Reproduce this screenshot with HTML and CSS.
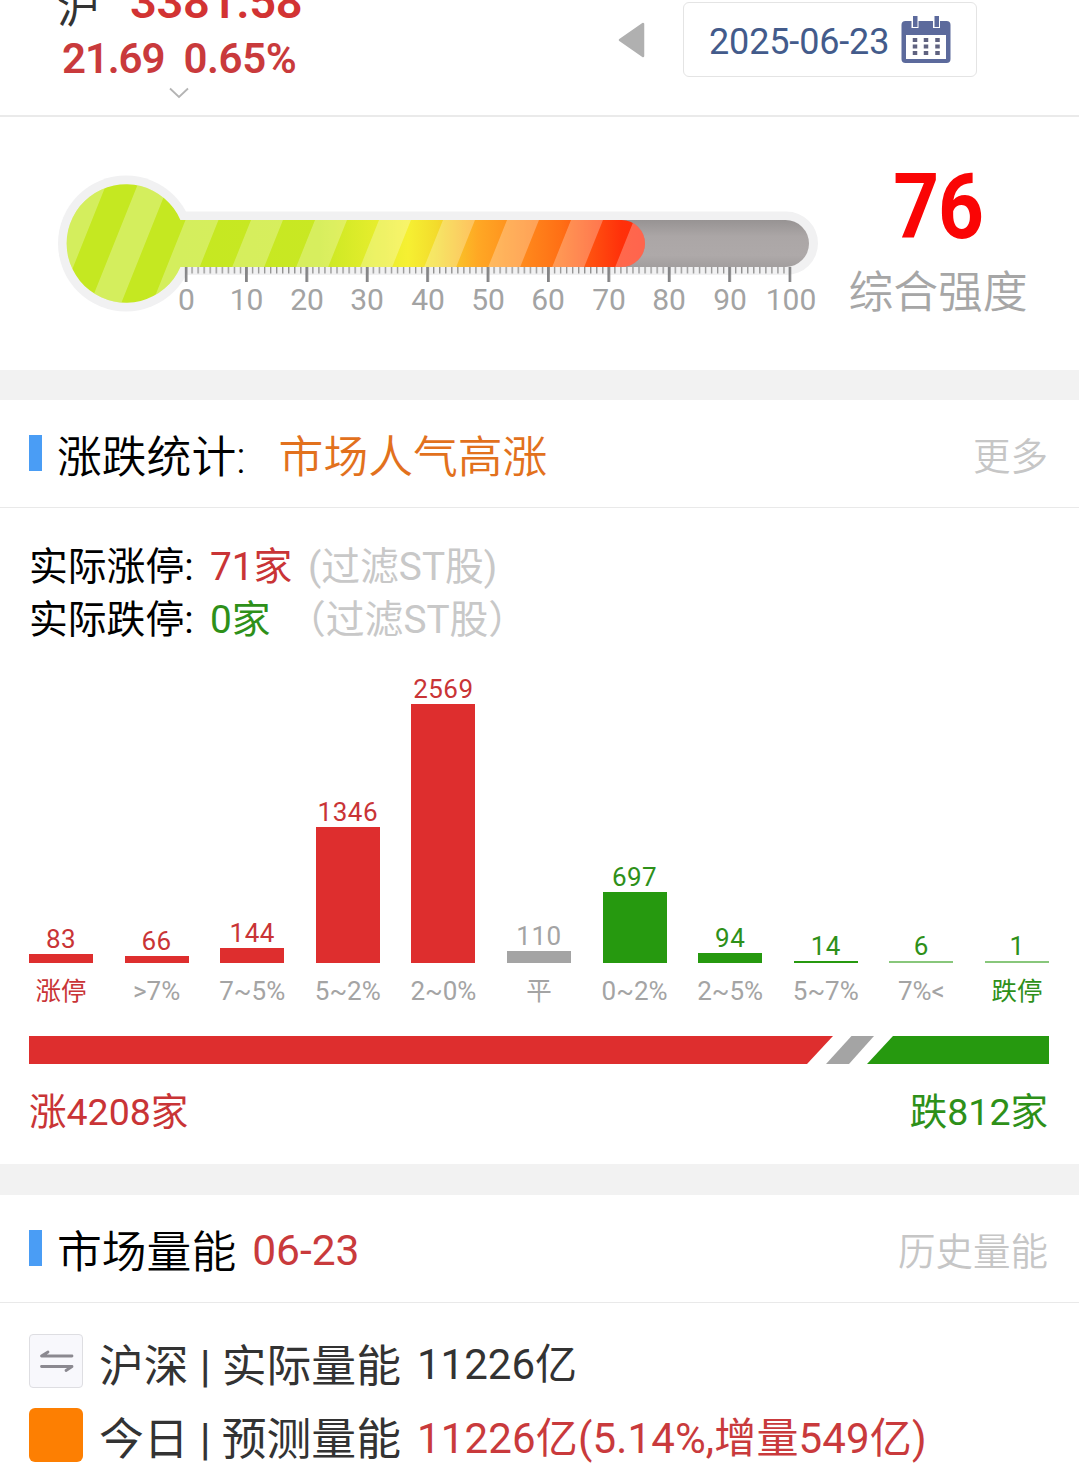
FILE: index.html
```html
<!DOCTYPE html>
<html lang="zh-CN">
<head>
<meta charset="utf-8">
<title>市场强度</title>
<link rel="stylesheet" href="styles.css">
</head>
<body>
<header class="topbar">
  <div class="index">
    <div class="index-main"><span class="index-name">沪</span><span class="index-value">3381.58</span></div>
    <div class="index-change"><span class="points">21.69</span><span>0.65%</span></div>
    <svg class="chevron" width="20" height="12" viewBox="0 0 20 12"><path d="M1 1.5l9 8.5 9-8.5" fill="none" stroke="#b4b4b4" stroke-width="1.8"/></svg>
  </div>
  <div class="date-nav">
    <svg class="prev" width="28" height="36" viewBox="0 0 28 36"><path d="M2 18L25 2v32z" fill="#b0b0b0" stroke="#b0b0b0" stroke-width="2.5" stroke-linejoin="round"/></svg>
    <div class="date-box">
      <span>2025-06-23</span>
      <svg width="50" height="48" viewBox="0 0 50 48">
        <rect x="0.5" y="5" width="49" height="42" rx="4" fill="#5c6a9c"/>
        <rect x="5" y="19" width="40" height="24" fill="#fff"/>
        <path d="M10.5 0h7v12h-7zM32 0h7v12h-7z" fill="#fff"/>
        <path d="M12 0h4.500v11H12zM33.500 0H38v11h-4.500z" fill="#5c6a9c"/>
        <path d="M14 22v17M25 22v17M36.500 22v17" stroke="#5f6280" stroke-width="4.500" stroke-dasharray="4 2.500"/>
      </svg>
    </div>
  </div>
</header>

<section class="strength">
  <svg class="gauge" width="780" height="150" viewBox="50 170 780 150">
    <defs>
      <linearGradient id="heat" gradientUnits="userSpaceOnUse" x1="180" y1="0" x2="645" y2="0">
        <stop offset="0" stop-color="#c5e821"/><stop offset=".3" stop-color="#c9e823"/>
        <stop offset=".49" stop-color="#f6f032"/><stop offset=".55" stop-color="#f3dc2c"/><stop offset=".64" stop-color="#ffa824"/>
        <stop offset=".82" stop-color="#ff6f15"/><stop offset=".95" stop-color="#ff300a"/><stop offset="1" stop-color="#ff2c0c"/>
      </linearGradient>
      <linearGradient id="groove" x1="0" y1="0" x2="0" y2="1">
        <stop offset="0" stop-color="#979393"/><stop offset=".35" stop-color="#aba6a6"/><stop offset=".75" stop-color="#aea9a9"/><stop offset="1" stop-color="#a29e9e"/>
      </linearGradient>
      <clipPath id="fill"><path d="M180.400 220H621.500a23.500 23.500 0 0 1 0 47H180.400a59.300 59.300 0 1 1 0-47z"/></clipPath>
      <pattern id="minor" patternUnits="userSpaceOnUse" x="185.400" y="267" width="6.040" height="7"><rect width="1.300" height="6.500" fill="#909090"/></pattern>
      <pattern id="major" patternUnits="userSpaceOnUse" x="184.600" y="267" width="60.400" height="15"><rect width="2.800" height="15" fill="#858587"/></pattern>
    </defs>
    <circle cx="126" cy="243.500" r="68" fill="#f1f1f2"/>
    <rect x="130" y="211.500" width="688" height="63.500" rx="31.700" fill="#f1f1f2"/>
    <rect x="560" y="220" width="249" height="47" rx="23.500" fill="url(#groove)"/>
    <g clip-path="url(#fill)">
      <rect x="60" y="180" width="590" height="130" fill="url(#heat)"/>
      <path transform="translate(16)" fill="#fff" fill-opacity=".27" d="M24 180H92L40 310H0zM123.500 180h31l-52 130h-31zM185.500 180h33l-52 130h-33zM251 180h32l-52 130h-32zM315 180h32l-52 130h-32zM379 180h32l-52 130h-32zM443 180h32l-52 130h-32zM507 180h32l-52 130h-32zM571 180h32l-52 130h-32zM634 180h32l-52 130h-32z"/>
    </g>
    <rect x="185" y="267" width="606" height="7" fill="url(#minor)"/>
    <rect x="184.600" y="267" width="607" height="15" fill="url(#major)"/>
    <g class="scale"><text x="186.500" y="310">0</text><text x="246.500" y="310">10</text><text x="307" y="310">20</text><text x="367" y="310">30</text><text x="428" y="310">40</text><text x="488" y="310">50</text><text x="548" y="310">60</text><text x="609" y="310">70</text><text x="669" y="310">80</text><text x="730" y="310">90</text><text x="791" y="310">100</text></g>
  </svg>
  <div class="score"><div class="score-value">76</div><div class="score-label">综合强度</div></div>
</section>

<section class="card">
  <div class="card-head"><i class="marker"></i><h2>涨跌统计:</h2><span class="mood">市场人气高涨</span><a class="more">更多</a></div>
  <div class="limits">
    <div class="limit"><span>实际涨停:</span><b class="red">71家</b><em class="half">(过滤ST股)</em></div>
    <div class="limit"><span>实际跌停:</span><b class="green">0家</b><em>（过滤ST股）</em></div>
  </div>
  <div class="chart">
    <div class="col red"><span>83</span><i style="height:9px"></i><label>涨停</label></div>
    <div class="col red muted"><span>66</span><i style="height:7px"></i><label>&gt;7%</label></div>
    <div class="col red muted"><span>144</span><i style="height:15px"></i><label>7~5%</label></div>
    <div class="col red muted"><span>1346</span><i style="height:136px"></i><label>5~2%</label></div>
    <div class="col red muted"><span>2569</span><i style="height:259px"></i><label>2~0%</label></div>
    <div class="col gray"><span>110</span><i style="height:12px"></i><label>平</label></div>
    <div class="col green muted"><span>697</span><i style="height:71px"></i><label>0~2%</label></div>
    <div class="col green muted"><span>94</span><i style="height:10px"></i><label>2~5%</label></div>
    <div class="col green muted"><span>14</span><i style="height:2px"></i><label>5~7%</label></div>
    <div class="col green muted faint"><span>6</span><i style="height:2px"></i><label>7%&lt;</label></div>
    <div class="col green faint"><span>1</span><i style="height:2px"></i><label>跌停</label></div>
  </div>
  <svg class="ratio" width="1020" height="28" viewBox="0 0 1020 28">
    <path d="M0 0H804L778 28H0z" fill="#de2e2e"/><path d="M822.500 0H845L820 28H797z" fill="#a4a4a4"/><path d="M864 0H1020V28H838z" fill="#26990f"/>
  </svg>
  <div class="totals"><span class="red">涨4208家</span><span class="green">跌812家</span></div>
</section>

<section class="card volume">
  <div class="card-head"><i class="marker"></i><h2>市场量能</h2><span class="day">06-23</span><a class="more">历史量能</a></div>
  <div class="rows">
    <div class="row">
      <span class="swap"><svg width="36" height="24" viewBox="0 0 36 24"><path d="M34 7H3.500l6.500-4M3.500 17.500H34l-6 4" fill="none" stroke="#8b8990" stroke-width="2.800" stroke-linecap="round" stroke-linejoin="round"/></svg></span>
      <span class="row-label actual">沪深 | 实际量能</span><span class="row-value">11226亿</span>
    </div>
    <div class="row">
      <span class="swatch"></span>
      <span class="row-label">今日 | 预测量能</span><span class="row-value red">11226亿(5.14%,增量549亿)</span>
    </div>
  </div>
</section>
</body>
</html>
```
FILE: styles.css
```css
* { box-sizing: border-box; }
body { margin: 0; width: 1079px; height: 1474px; overflow: hidden; background: #fff; color: #000; font-family: Roboto, "Noto Sans CJK SC", sans-serif; }
.red { color: #c93436; }
.green { color: #2e9019; }
.gray { color: #a4a4a4; }

.topbar { display: flex; height: 117px; border-bottom: 2px solid #eaeaea; }
.index { width: 618px; padding-left: 57px; }
.index-main { display: flex; height: 34px; }
.index-name { width: 73px; margin-top: -20px; font-size: 43px; line-height: 56px; color: #333; }
.index-value { margin-top: -26px; font-size: 47px; line-height: 56px; font-weight: 600; letter-spacing: -.3px; color: #d23333; }
.index-change { display: flex; gap: 19px; padding-left: 5px; font-size: 42px; line-height: 50px; font-weight: 600; letter-spacing: -.4px; color: #c93a3c; }
.points { letter-spacing: -1.100px; }
.chevron { display: block; margin: 3px 0 0 112px; }
.date-nav { display: flex; align-items: flex-start; }
.prev { margin: 22px 37px 0 0; }
.date-box { display: flex; align-items: center; gap: 12px; width: 294px; height: 75px; margin-top: 2px; padding-left: 25px; border: 1.500px solid #e4e4e4; border-radius: 6px; font-size: 36px; letter-spacing: -.15px; color: #435b8b; }
.date-box span { padding-top: 4px; }

.strength { display: flex; height: 253px; padding: 53px 0 0 50px; }
.gauge { flex: none; }
.scale { font-size: 30px; text-anchor: middle; fill: #a3a3a3; }
.score { width: 216px; text-align: center; }
.score-value { height: 96px; font-size: 90px; line-height: 76px; font-weight: 700; letter-spacing: -1.500px; color: #fa0505; transform: scaleX(.89); }
.score-label { font-size: 44.800px; line-height: 54px; font-weight: 350; color: #a6a6a6; white-space: nowrap; }

.card { border-top: 30px solid #f2f2f2; }
.volume { border-top-width: 31px; }
.card-head { display: flex; align-items: center; height: 108px; padding: 0 31px 0 29px; border-bottom: 1px solid #e9e9e9; }
.marker { width: 13px; height: 36px; margin: -2px 15px 0 0; background: #4a9df5; }
h2 { margin: 0; font-size: 44.800px; font-weight: 350; }
.mood { margin-left: 33px; font-size: 44.800px; font-weight: 350; color: #e2711d; }
.more { margin-left: auto; font-size: 37.500px; font-weight: 350; color: #c6c6c6; }
.limits { height: 168px; padding: 32px 0 0 29px; }
.limit { display: flex; height: 53px; font-size: 38.800px; line-height: 54px; }
.limit span { width: 181px; white-space: nowrap; }
.limit b { width: 75px; font-weight: 400; white-space: nowrap; }
.limit em { padding-left: 2px; font-style: normal; color: #c8c8c8; }
.limit .half { margin-left: 21px; }

.chart { display: flex; justify-content: space-between; align-items: flex-end; height: 337px; margin: 0 30px 0 29px; }
.col { display: flex; flex-direction: column; align-items: center; width: 64px; font-size: 26px; white-space: nowrap; }
.col span { line-height: 30px; letter-spacing: .5px; }
.col i { width: 64px; background: #de2e2e; }
.col.green i { background: #26990f; }
.col.gray i { background: #a4a4a4; }
.col.faint i { opacity: .55; }
.col label { height: 50px; font-size: 25.500px; line-height: 57px; }
.col.muted label { font-size: 26px; color: #a4a4a4; }
.ratio { display: block; margin: 23px 0 0 29px; }
.totals { display: flex; justify-content: space-between; height: 100px; padding: 0 31px 0 29px; font-size: 37.500px; line-height: 96px; }

.day { margin-left: 16px; padding-top: 4px; font-size: 42.500px; color: #c93a3c; }
.rows { padding: 31px 0 0 29px; }
.row { display: flex; align-items: center; height: 54px; margin-bottom: 20px; color: #333; white-space: nowrap; }
.swap { display: flex; align-items: center; justify-content: center; width: 54px; height: 54px; border: 1px solid #dedee2; border-radius: 4px; background: #f8f8fc; }
.swatch { width: 54px; height: 54px; border-radius: 6px; background: #fd7f02; }
.row-label { width: 318px; margin-left: 16px; font-size: 44.800px; }
.row-label.actual { padding-top: 3px; }
.row-value { padding-bottom: 2px; font-size: 42px; }
.row-value.red { color: #c93a3c; letter-spacing: .15px; }
```
